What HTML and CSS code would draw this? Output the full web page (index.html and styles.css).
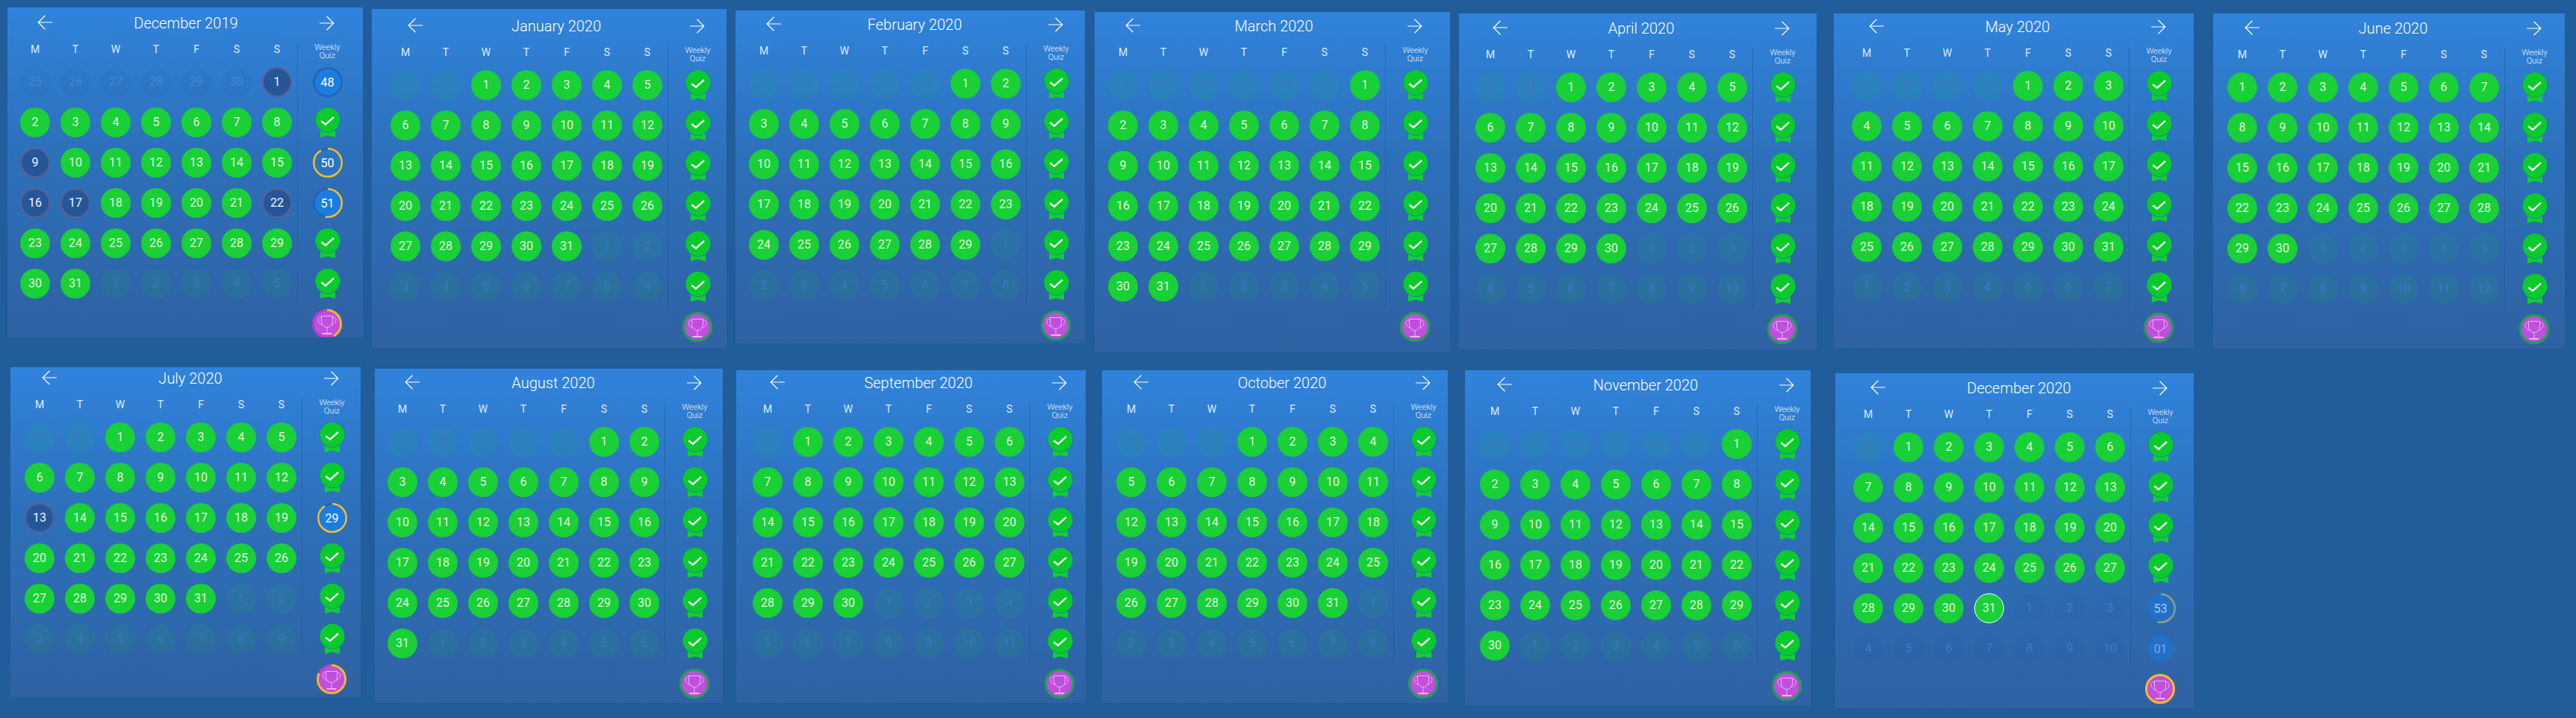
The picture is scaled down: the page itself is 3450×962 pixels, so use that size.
FILE: index.html
```html
<!DOCTYPE html>
<html>

<head>
  <meta charset="utf-8">
  <title>Daily challenge calendar</title>
  <link rel="stylesheet" href="styles.css">
</head>

<body>

  <!-- Each card is filled in by script.js from its data-month -->
  <div class="row">
    <section class="card dec19" data-month="2019-12"></section>
    <section class="card jan20" data-month="2020-1"></section>
    <section class="card feb20" data-month="2020-2"></section>
    <section class="card mar20" data-month="2020-3"></section>
    <section class="card apr20" data-month="2020-4"></section>
    <section class="card may20" data-month="2020-5"></section>
    <section class="card jun20" data-month="2020-6"></section>
  </div>
  <div class="row">
    <section class="card jul20" data-month="2020-7"></section>
    <section class="card aug20" data-month="2020-8"></section>
    <section class="card sep20" data-month="2020-9"></section>
    <section class="card oct20" data-month="2020-10"></section>
    <section class="card nov20" data-month="2020-11"></section>
    <section class="card dec20" data-month="2020-12"></section>
  </div>

  <script src="script.js"></script>
</body>

</html>
```

FILE: styles.css
```css
* {
  box-sizing: border-box;
}

body {
  margin: 0;
  height: 962px;
  overflow: hidden;
  background-color: #215c9b;
  font-family: Roboto, "Liberation Sans", sans-serif;
  color: #ffffff;
}

.row {
  display: flex;
  align-items: flex-start;
  height: 480px;
}

.card {
  flex: none;
  overflow: hidden;
  background: linear-gradient(#3083dc, #2d70ba 45%, #2f62a3);
}

/* the cards are pasted screenshots, so every one has its own crop */
.dec19 { margin: 10px 0 0 10px; width: 476px; height: 442px; padding: 7px 0 0 17px; }
.jan20 { margin: 12px 0 0 12px; width: 475px; height: 454px; padding: 9px 0 0 25px; }
.feb20 { margin: 14px 0 0 12px; width: 468px; height: 446px; padding: 5px 0 0 18px; }
.mar20 { margin: 16px 0 0 13px; width: 476px; height: 455px; padding: 5px 0 0 18px; }
.apr20 { margin: 18px 0 0 12px; width: 479px; height: 450px; padding: 6px 0 0 22px; }
.may20 { margin: 18px 0 0 23px; width: 482px; height: 448px; padding: 4px 0 0 24px; }
.jun20 { margin: 18px 0 0 26px; width: 471px; height: 449px; padding: 6px 0 0 19px; }
.jul20 { margin: 12px 0 0 14px; width: 469px; height: 442px; padding: 1px 0 0 19px; }
.aug20 { margin: 14px 0 0 19px; width: 466px; height: 448px; padding: 5px 0 0 17px; }
.sep20 { margin: 16px 0 0 18px; width: 468px; height: 446px; padding: 3px 0 0 22px; }
.oct20 { margin: 16px 0 0 22px; width: 463px; height: 446px; padding: 3px 0 0 19px; }
.nov20 { margin: 16px 0 0 23px; width: 463px; height: 449px; padding: 6px 0 0 20px; }
.dec20 { margin: 20px 0 0 33px; width: 480px; height: 449px; padding: 6px 0 0 24px; }

.head {
  display: flex;
  align-items: center;
  width: 421px;
  height: 28px;
  padding-left: 23px;
}

.title {
  flex: 1;
  text-align: center;
  font-size: 20px;
  font-weight: 300;
}

.arrow {
  flex: none;
  width: 20px;
  height: 20px;
  fill: none;
  stroke: #ffffff;
  stroke-width: 1.2;
}

.arrow-back {
  margin-bottom: 2px;
}

.body {
  display: flex;
  width: 451px;
  margin-top: 12px;
}

.days {
  width: 371px;
}

.names {
  display: grid;
  grid-template-columns: repeat(7, 40px);
  column-gap: 14px;
  height: 18px;
  margin-bottom: 15px;
  line-height: 18px;
  text-align: center;
  font-size: 14px;
  color: #dcedff;
}

.grid {
  display: grid;
  grid-template-columns: repeat(7, 40px);
  grid-auto-rows: 40px;
  gap: 14px;
}

.day {
  border-radius: 50%;
  line-height: 40px;
  text-align: center;
  font-size: 16px;
  color: #e4f9df;
  background-color: #19d036;
}

.day.missed {
  border: 2px solid #5f5f92;
  line-height: 36px;
  color: #f2f6fc;
  background-color: #25569a;
}

.day.today {
  border: 1.5px solid #ffffff;
  line-height: 37px;
}

.day.out {
  color: #3b7ab8;
  background-color: rgba(26, 208, 53, 0.09);
}

.day.dim {
  color: rgba(125, 175, 240, 0.32);
  background-color: rgba(33, 92, 155, 0.07);
}

.quiz {
  width: 80px;
  height: 350px;
  border-left: 1px solid rgba(33, 84, 148, 0.55);
}

.quiz-name {
  height: 33px;
  padding-top: 1px;
  text-align: center;
  font-size: 11px;
  font-weight: 300;
  line-height: 11px;
  color: #eef5ff;
}

.quiz-list {
  display: flex;
  flex-direction: column;
  align-items: center;
  gap: 14px;
}

.badge {
  display: grid;
  place-items: center;
  width: 40px;
  height: 40px;
  font-size: 16px;
}

.badge svg,
.badge span {
  grid-area: 1 / 1;
}

.badge svg {
  width: 40px;
  height: 40px;
}

.badge.faded span {
  color: #a9c9ec;
}

.badge.faded.future span {
  color: #79aadf;
}

.ribbon {
  fill: #0fd02e;
}

.medal-gap {
  fill: #2a6cb8;
}

.medal {
  fill: #0bcb2c;
}

.tick {
  fill: none;
  stroke: #ffffff;
  stroke-width: 2.4;
}

.disc {
  fill: #1a7de2;
}

.plain .disc {
  fill: #2a74c6;
}

.faded .disc {
  fill: #2270c8;
}

.track {
  fill: none;
  stroke: #2265b0;
  stroke-width: 2.5;
}

.arc {
  fill: none;
  stroke: #efbd30;
  stroke-width: 2.5;
}

.faded .arc {
  stroke: #8f9f78;
}

.trophy-row {
  display: flex;
  justify-content: flex-end;
  width: 431px;
  margin-top: 7px;
}

.trophy-disc {
  fill: #bf4fdc;
}

.trophy-track {
  fill: none;
  stroke: #a845cc;
  stroke-width: 3;
}

.trophy-arc {
  fill: none;
  stroke: #f2b42c;
  stroke-width: 3;
}

.trophy-arc.won {
  stroke: #1ca350;
}

.trophy-arc.gold {
  stroke: #f6b92e;
}

.cup {
  fill: none;
  stroke: #efb4f6;
  stroke-width: 1;
}
```

FILE: script.js
```js
var MONTHS = ["January", "February", "March", "April", "May", "June", "July",
  "August", "September", "October", "November", "December"];
var NAMES = ["M", "T", "W", "T", "F", "S", "S"];

// what differs from a fully completed month
var SPECIAL = {
  "2019-12": {
    missed: [1, 9, 16, 17, 22],
    dimBefore: true,
    quiz: [{ n: "48", arc: 0 }, "done", { n: "50", arc: 92, plain: true }, { n: "51", arc: 53 }, "done", "done"],
    trophy: { arc: 42, kind: "" }
  },
  "2020-7": {
    missed: [13],
    quiz: ["done", "done", { n: "29", arc: 91 }, "done", "done", "done"],
    trophy: { arc: 82, kind: "" }
  },
  "2020-12": {
    today: 31,
    dimAfter: true,
    quiz: ["done", "done", "done", "done",
      { n: "53", arc: 54, faded: true }, { n: "01", arc: 0, faded: true, future: true }],
    trophy: { arc: 100, kind: "gold" }
  }
};

function arrow(back) {
  var d = back ? "M20 10H1.5M10.5 0.8L1.2 10L10.5 19.2" : "M0 10H18.5M9.5 0.8L18.8 10L9.5 19.2";
  return '<svg class="arrow' + (back ? " arrow-back" : "") + '" viewBox="0 0 20 20"><path d="' + d + '"/></svg>';
}

function dayCell(text, kind) {
  return '<div class="day ' + kind + '">' + text + "</div>";
}

function dayCells(year, month, info) {
  var first = new Date(year, month - 1, 1);
  var lead = (first.getDay() + 6) % 7;
  var start = new Date(year, month - 1, 1 - lead);
  var html = "";
  for (var i = 0; i < 42; i++) {
    var d = new Date(start.getFullYear(), start.getMonth(), start.getDate() + i);
    var n = d.getDate();
    var kind = "";
    if (d.getMonth() !== month - 1) {
      kind = "out";
      if (i < lead && info.dimBefore) kind = "dim";
      if (i >= lead && info.dimAfter) kind = "dim";
    } else if (info.missed && info.missed.indexOf(n) >= 0) {
      kind = "missed";
    } else if (info.today === n) {
      kind = "today";
    }
    html += dayCell(n, kind);
  }
  return html;
}

function doneBadge() {
  return '<div class="badge"><svg viewBox="0 0 40 40">' +
    '<path class="ribbon" d="M10 30H30V40L20 37.5L10 40Z"/>' +
    '<circle class="medal-gap" cx="20" cy="16.5" r="17.3"/>' +
    '<circle class="medal" cx="20" cy="16.5" r="16.5"/>' +
    '<path class="tick" d="M11.3 18.3L17 22.8L28 12.8"/></svg></div>';
}

function numberBadge(week) {
  var cls = "badge" + (week.faded ? " faded" : "") + (week.future ? " future" : "") + (week.plain ? " plain" : "");
  var rings = week.faded ? "" : '<circle class="track" cx="20" cy="20" r="18.75"/>';
  if (week.arc) {
    rings += '<circle class="arc" cx="20" cy="20" r="18.75" pathLength="100" stroke-dasharray="' +
      week.arc + ' 100" transform="rotate(-90 20 20)"/>';
  }
  return '<div class="' + cls + '"><svg viewBox="0 0 40 40">' +
    '<circle class="disc" cx="20" cy="20" r="17.5"/>' + rings + "</svg><span>" + week.n + "</span></div>";
}

function trophyBadge(trophy) {
  return '<div class="badge"><svg viewBox="0 0 40 40">' +
    '<circle class="trophy-disc" cx="20" cy="20" r="18.5"/>' +
    '<circle class="trophy-track" cx="20" cy="20" r="18.5"/>' +
    '<circle class="trophy-arc ' + trophy.kind + '" cx="20" cy="20" r="18.5" pathLength="100" stroke-dasharray="' +
    trophy.arc + ' 100" transform="rotate(-90 20 20)"/>' +
    '<path class="cup" d="M12.5 9.5H27.5V16C27.5 21 24 24.5 20 24.5C16 24.5 12.5 21 12.5 16Z' +
    "M12.5 11.5C9.5 10.5 8 12 8 14.5C8 18 10.5 20.5 14 21.5" +
    "M27.5 11.5C30.5 10.5 32 12 32 14.5C32 18 29.5 20.5 26 21.5" +
    'M20 24.5V32M13.5 32.5H26.5M13.5 33.5H26.5"/></svg></div>';
}

function fillCard(card) {
  var key = card.getAttribute("data-month");
  var parts = key.split("-");
  var year = Number(parts[0]);
  var month = Number(parts[1]);
  var info = SPECIAL[key] || {};
  var quiz = info.quiz || ["done", "done", "done", "done", "done", "done"];
  var trophy = info.trophy || { arc: 100, kind: "won" };

  var names = "";
  for (var i = 0; i < 7; i++) names += "<span>" + NAMES[i] + "</span>";

  var weeks = "";
  for (var w = 0; w < quiz.length; w++) {
    weeks += quiz[w] === "done" ? doneBadge() : numberBadge(quiz[w]);
  }

  card.innerHTML =
    '<div class="head">' + arrow(true) +
    '<div class="title">' + MONTHS[month - 1] + " " + year + "</div>" + arrow(false) + "</div>" +
    '<div class="body"><div class="days"><div class="names">' + names + "</div>" +
    '<div class="grid">' + dayCells(year, month, info) + "</div></div>" +
    '<div class="quiz"><div class="quiz-name">Weekly<br>Quiz</div>' +
    '<div class="quiz-list">' + weeks + "</div></div></div>" +
    '<div class="trophy-row">' + trophyBadge(trophy) + "</div>";
}

var cards = document.getElementsByClassName("card");
for (var c = 0; c < cards.length; c++) fillCard(cards[c]);
```
